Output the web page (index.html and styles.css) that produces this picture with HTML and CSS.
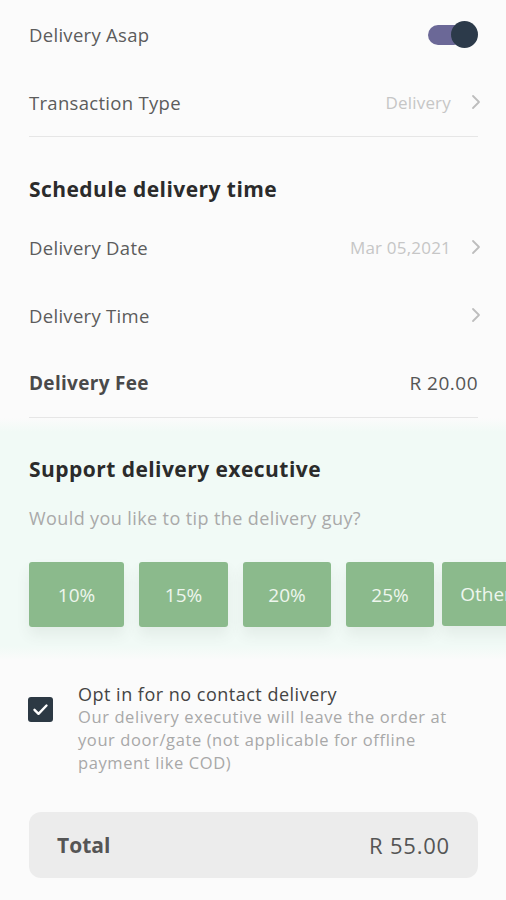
FILE: index.html
```html
<!DOCTYPE html>
<html>
<head>
<meta charset="utf-8">
<link rel="stylesheet" href="styles.css">
</head>
<body>
<div class="page">
  <div class="row">
    <span class="label">Delivery Asap</span>
    <span class="toggle"><span class="track"></span><span class="knob"></span></span>
  </div>
  <div class="row">
    <span class="label">Transaction Type</span>
    <span class="value">Delivery <svg class="chev" viewBox="0 0 10 16" width="10" height="16"><path d="M2 2l6 6-6 6" fill="none" stroke="#bdbdbd" stroke-width="1.8" stroke-linecap="round" stroke-linejoin="round"/></svg></span>
  </div>
  <div class="divider"></div>

  <h2 class="title sched">Schedule delivery time</h2>
  <div class="row">
    <span class="label">Delivery Date</span>
    <span class="value">Mar 05,2021 <svg class="chev" viewBox="0 0 10 16" width="10" height="16"><path d="M2 2l6 6-6 6" fill="none" stroke="#bdbdbd" stroke-width="1.8" stroke-linecap="round" stroke-linejoin="round"/></svg></span>
  </div>
  <div class="row">
    <span class="label">Delivery Time</span>
    <span class="value"><svg class="chev" viewBox="0 0 10 16" width="10" height="16"><path d="M2 2l6 6-6 6" fill="none" stroke="#bdbdbd" stroke-width="1.8" stroke-linecap="round" stroke-linejoin="round"/></svg></span>
  </div>
  <div class="row">
    <span class="label bold">Delivery Fee</span>
    <span class="amount">R 20.00</span>
  </div>
  <div class="divider"></div>

  <section class="tip">
    <h2 class="title">Support delivery executive</h2>
    <p class="sub">Would you like to tip the delivery guy?</p>
    <div class="tips">
      <div class="btn w95">10%</div>
      <div class="btn w89">15%</div>
      <div class="btn w88">20%</div>
      <div class="btn w88">25%</div>
      <div class="btn w88 other">Other</div>
    </div>
  </section>

  <div class="opt">
    <span class="check"><svg viewBox="0 0 25 25" width="25" height="25"><path d="M6.5 12.8l4 4 8-8.3" fill="none" stroke="#ffffff" stroke-width="2.4" stroke-linecap="round" stroke-linejoin="round"/></svg></span>
    <div class="opt-text">
      <div class="opt-title">Opt in for no contact delivery</div>
      <div class="opt-desc">Our delivery executive will leave the order at your door/gate (not applicable for offline payment like COD)</div>
    </div>
  </div>

  <div class="total">
    <span class="total-label">Total</span>
    <span class="total-value">R 55.00</span>
  </div>
</div>
</body>
</html>
```

FILE: styles.css
```css
html, body {
  margin: 0;
  padding: 0;
  background: #fbfbfb;
  overflow: hidden;
}
body {
  font-family: "Open Sans", "Noto Sans", sans-serif;
  color: #555;
}
.page {
  width: 449px;
  padding: 0 28px 0 29px;
}
.row {
  height: 68px;
  display: flex;
  align-items: center;
  justify-content: space-between;
}
.label {
  font-size: 18.5px;
  color: #5c5c5c;
  letter-spacing: 0.3px;
}
.label.bold {
  font-size: 19px;
  font-weight: 700;
  color: #4a4a4a;
}
.value {
  display: flex;
  align-items: center;
  gap: 20px;
  font-size: 17px;
  letter-spacing: 0.2px;
  color: #c6c6c6;
}
.chev {
  margin-right: -3px;
  display: block;
}
.amount {
  font-size: 19px;
  letter-spacing: 0.5px;
  color: #555;
}
.toggle {
  position: relative;
  width: 50px;
  height: 27px;
}
.track {
  position: absolute;
  left: 0;
  top: 4px;
  width: 36px;
  height: 20px;
  border-radius: 10px;
  background: #6b6897;
}
.knob {
  position: absolute;
  right: 0;
  top: 0;
  width: 27px;
  height: 27px;
  border-radius: 50%;
  background: #2c3a4a;
}
.divider {
  height: 1px;
  background: #e6e6e6;
}
.title {
  margin: 0;
  font-size: 21px;
  line-height: 26px;
  font-weight: 700;
  letter-spacing: 0.45px;
  color: #2b2b2b;
}
.sched {
  margin-top: 39px;
  margin-bottom: 11px;
}
.tip {
  margin: 0 -28px 0 -29px;
  padding: 38px 0 33px 29px;
  background: linear-gradient(to bottom, rgba(241,250,246,0) 0px, #f1faf6 14px, #f1faf6 calc(100% - 14px), rgba(241,250,246,0) 100%);
  overflow: hidden;
}
.sub {
  margin: 24px 0 0;
  font-size: 18px;
  line-height: 24px;
  letter-spacing: 0.4px;
  color: #a9a9a9;
}
.tips {
  display: flex;
  gap: 15px;
  margin-top: 32px;
}
.btn {
  flex: none;
  height: 65px;
  border-radius: 3px;
  background: #8bba8c;
  color: #eef6ee;
  font-size: 19px;
  display: flex;
  align-items: center;
  justify-content: center;
  box-shadow: 0 8px 14px rgba(60, 80, 70, 0.08);
}
.w95 { width: 95px; }
.w89 { width: 89px; }
.w88 { width: 88px; }
.btn.other {
  margin-left: -7px;
  height: 64px;
}
.opt {
  display: flex;
  align-items: flex-start;
  margin-top: 23px;
}
.check {
  flex: none;
  width: 25px;
  height: 25px;
  margin-top: 14px;
  margin-left: -1px;
  border-radius: 3px;
  background: #2c3944;
}
.check svg { display: block; }
.opt-text {
  margin-left: 25px;
  width: 390px;
}
.opt-title {
  font-size: 18px;
  line-height: 22px;
  letter-spacing: 0.5px;
  color: #444;
}
.opt-desc {
  font-size: 16.5px;
  line-height: 23px;
  color: #a8a8a8;
  letter-spacing: 0.6px;
}
.total {
  margin-top: 38px;
  height: 66px;
  border-radius: 12px;
  background: #ececec;
  display: flex;
  align-items: center;
  justify-content: space-between;
  padding: 0 28px;
}
.total-label {
  font-size: 21px;
  font-weight: 700;
  color: #555;
}
.total-value {
  font-size: 22px;
  letter-spacing: 0.8px;
  color: #555;
}
```
